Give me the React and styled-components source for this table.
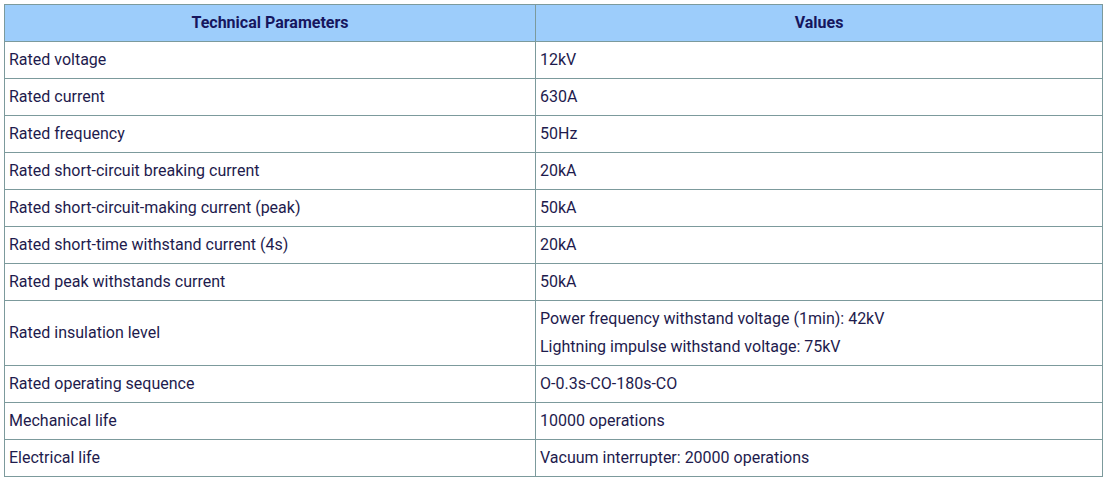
import React from "react";
import styled, { createGlobalStyle } from "styled-components";

const Global = createGlobalStyle`
  html, body { margin: 0; padding: 0; background: #ffffff; }
  body { font-family: Roboto, "Liberation Sans", Arial, sans-serif; }
`;

const Wrap = styled.div`
  padding: 4px 3px 0 4px;
`;

const Table = styled.table`
  width: 1099px;
  border-collapse: collapse;
  table-layout: fixed;
  font-family: Roboto, "Liberation Sans", Arial, sans-serif;
  font-size: 16px;
  color: #1e1b4d;
`;

const Head = styled.th`
  background: #9dcdfb;
  border: 1px solid #7c9a9c;
  height: 37px;
  padding: 0 4px;
  font-weight: 700;
  color: #16165e;
  text-align: center;
  line-height: 22px;
  box-sizing: border-box;
`;

const Cell = styled.td`
  border: 1px solid #7c9a9c;
  padding: 7px 4px;
  line-height: 22px;
  text-align: left;
  vertical-align: middle;
`;

const Line = styled.p`
  margin: 0;
  & + & { margin-top: 6px; }
`;

const rows = [
  ["Rated voltage", ["12kV"]],
  ["Rated current", ["630A"]],
  ["Rated frequency", ["50Hz"]],
  ["Rated short-circuit breaking current", ["20kA"]],
  ["Rated short-circuit-making current (peak)", ["50kA"]],
  ["Rated short-time withstand current (4s)", ["20kA"]],
  ["Rated peak withstands current", ["50kA"]],
  [
    "Rated insulation level",
    [
      "Power frequency withstand voltage (1min): 42kV",
      "Lightning impulse withstand voltage: 75kV",
    ],
  ],
  ["Rated operating sequence", ["O-0.3s-CO-180s-CO"]],
  ["Mechanical life", ["10000 operations"]],
  ["Electrical life", ["Vacuum interrupter: 20000 operations"]],
];

export default function App() {
  return (
    <>
      <Global />
      <Wrap>
        <Table>
          <colgroup>
            <col style={{ width: "531px" }} />
            <col />
          </colgroup>
          <thead>
            <tr>
              <Head>Technical Parameters</Head>
              <Head>Values</Head>
            </tr>
          </thead>
          <tbody>
            {rows.map(([k, v]) => (
              <tr key={k}>
                <Cell>{k}</Cell>
                <Cell>
                  {v.map((t) => (
                    <Line key={t}>{t}</Line>
                  ))}
                </Cell>
              </tr>
            ))}
          </tbody>
        </Table>
      </Wrap>
    </>
  );
}
